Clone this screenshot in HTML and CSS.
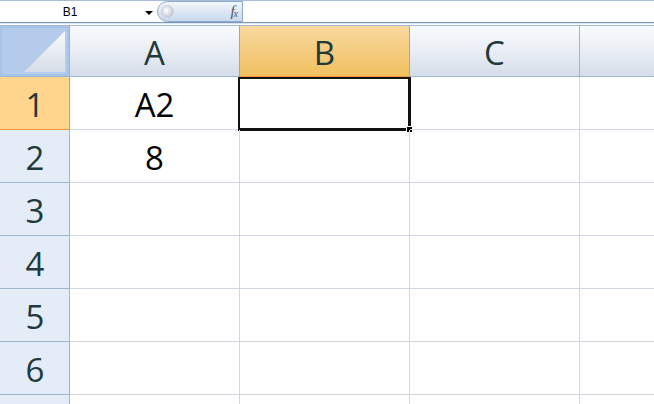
FILE: index.html
```html
<!DOCTYPE html>
<html>
<head>
<meta charset="utf-8">
<link rel="stylesheet" href="styles.css">
</head>
<body>
<div class="app">
  <div class="formula-bar">
    <div class="namebox">
      <span class="name">B1</span>
      <span class="arrow"></span>
    </div>
    <div class="pill">
      <span class="knob"></span>
      <span class="fx">f<sub>x</sub></span>
    </div>
    <div class="input"></div>
  </div>
  <div class="sep"></div>
  <div class="sheet">
    <div class="corner"><div class="tri"></div></div>
    <div class="colhead">A</div>
    <div class="colhead sel">B</div>
    <div class="colhead">C</div>
    <div class="colhead last"></div>

    <div class="rowhead sel">1</div>
    <div class="cell">A2</div>
    <div class="cell active"><div class="selbox"><span class="handle"></span></div></div>
    <div class="cell"></div>
    <div class="cell last"></div>

    <div class="rowhead">2</div>
    <div class="cell">8</div>
    <div class="cell"></div>
    <div class="cell"></div>
    <div class="cell last"></div>

    <div class="rowhead">3</div>
    <div class="cell"></div><div class="cell"></div><div class="cell"></div><div class="cell last"></div>

    <div class="rowhead">4</div>
    <div class="cell"></div><div class="cell"></div><div class="cell"></div><div class="cell last"></div>

    <div class="rowhead">5</div>
    <div class="cell"></div><div class="cell"></div><div class="cell"></div><div class="cell last"></div>

    <div class="rowhead">6</div>
    <div class="cell"></div><div class="cell"></div><div class="cell"></div><div class="cell last"></div>

    <div class="rowhead"></div>
    <div class="cell"></div><div class="cell"></div><div class="cell"></div><div class="cell last"></div>
  </div>
</div>
</body>
</html>
```

FILE: styles.css
```css
* { box-sizing: border-box; }
html, body { margin: 0; padding: 0; }
body {
  width: 654px;
  height: 404px;
  overflow: hidden;
  background: #ffffff;
  font-family: "Open Sans", "Noto Sans", sans-serif;
}
.app { display: flex; flex-direction: column; width: 654px; height: 404px; overflow: hidden; }

.formula-bar {
  display: flex;
  height: 23px;
  flex: none;
  border-top: 1px solid #a7bcd6;
  border-bottom: 1px solid #7b98bc;
  background: #ffffff;
}
.namebox {
  width: 157px;
  display: flex;
  align-items: center;
}
.name {
  width: 140px;
  text-align: center;
  font-family: "Liberation Sans", Arial, sans-serif;
  font-size: 12px;
  color: #000;
  padding-top: 1px;
}
.arrow {
  width: 0; height: 0;
  margin-left: 5px;
  margin-top: 2px;
  border-left: 4px solid transparent;
  border-right: 4px solid transparent;
  border-top: 4px solid #000;
}
.pill {
  width: 86px;
  height: 21px;
  border: 1px solid #8fa9c9;
  border-radius: 11px 0 0 11px;
  background: linear-gradient(to bottom, #f3f7fc 0%, #dde7f4 50%, #c9d8ec 100%);
  display: flex;
  align-items: center;
  justify-content: space-between;
  padding: 0 5px 0 3px;
}
.knob {
  width: 13px; height: 13px;
  border-radius: 50%;
  background: radial-gradient(circle at 40% 40%, #ffffff 0%, #d7dbe1 50%, #a8b0bb 100%);
  border: 1px solid #c9d2de;
}
.fx {
  font-family: "Liberation Serif", "Times New Roman", serif;
  font-style: italic;
  font-size: 15px;
  color: #4f5661;
  letter-spacing: -1px;
}
.fx sub { font-size: 10px; vertical-align: -1px; }
.input {
  flex: 1;
  background: #ffffff;
}
.sep {
  height: 3px;
  flex: none;
  background: #ffffff;
  border-bottom: 1px solid #a3b8d1;
  border-top: 1px solid #dde6f1;
}

.sheet {
  display: grid;
  grid-template-columns: 70px 170px 170px 170px 1fr;
  grid-template-rows: 51px repeat(7, 53px);
}
.corner {
  background: #b5cbeb;
  border-right: 1px solid #9eb6ce;
  border-bottom: 1px solid #9eb6ce;
  box-shadow: inset 0 0 0 2px #a9c4e9;
  display: flex;
  justify-content: flex-end;
  align-items: flex-end;
  padding: 0 4px 4px 0;
}
.tri {
  width: 41px;
  height: 41px;
  clip-path: polygon(100% 0, 100% 100%, 0 100%);
  background: linear-gradient(to bottom, #f9fafc, #d6dde8);
}
.colhead {
  background: linear-gradient(to bottom, #f9fbfd 0%, #e9eef5 50%, #d5dde9 100%);
  border-right: 1px solid #9eb6ce;
  border-bottom: 1px solid #9eb6ce;
  display: flex;
  align-items: center;
  justify-content: center;
  font-size: 33px;
  color: #1f3a3a;
  padding-top: 3px;
}
.colhead.sel {
  background: linear-gradient(to bottom, #f9d99f 0%, #f4cc80 50%, #f1c15f 100%);
  border-left: 1px solid #f29536;
  border-right: 1px solid #f29536;
  border-bottom: 1px solid #f29536;
  margin-left: -1px;
}
.colhead.last { border-right: none; }
.rowhead {
  background: #e4ecf7;
  border-right: 1px solid #9eb6ce;
  border-bottom: 1px solid #9eb6ce;
  display: flex;
  align-items: center;
  justify-content: center;
  font-size: 33px;
  color: #1f3a3a;
  padding-top: 3px;
  padding-left: 1px;
}
.rowhead.sel {
  background: #ffd58d;
  border-right: 1px solid #f29536;
  border-bottom: 1px solid #f29536;
}
.cell {
  border-right: 1px solid #d0d7e5;
  border-bottom: 1px solid #d0d7e5;
  display: flex;
  align-items: center;
  justify-content: center;
  font-size: 33px;
  color: #000;
  padding-top: 3px;
  position: relative;
}
.cell.last { border-right: none; }
.selbox {
  position: absolute;
  left: -2px;
  top: 0px;
  right: -2px;
  bottom: -2px;
  border: 2px solid #111;
  border-bottom-width: 3px;
  border-right-width: 3px;
}
.handle {
  position: absolute;
  right: -5px;
  bottom: -5px;
  width: 7px;
  height: 7px;
  background: #000;
  border: 1px solid #fff;
}
```
